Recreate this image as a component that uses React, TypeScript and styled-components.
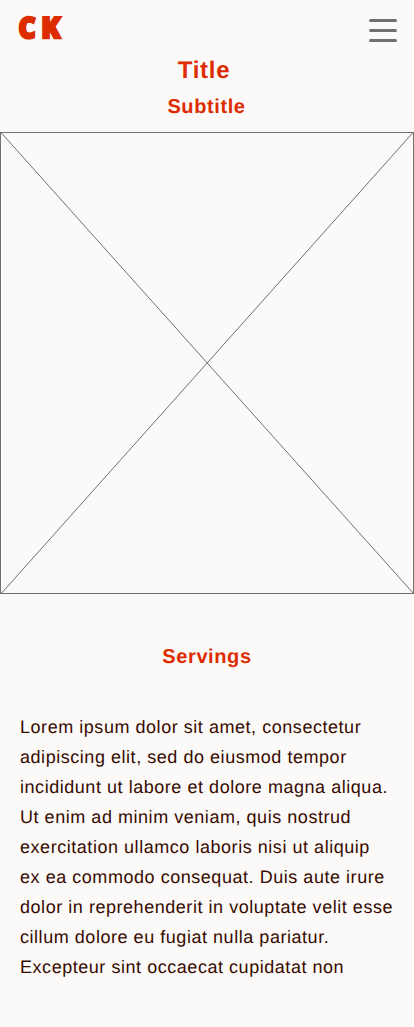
import React from "react";
import styled, { createGlobalStyle } from "styled-components";

const GlobalStyle = createGlobalStyle`
  * { box-sizing: border-box; }
  body {
    margin: 0;
    background: #fcfaf8;
    color: #370b00;
    font-family: "Liberation Sans", Arial, sans-serif;
    text-rendering: geometricPrecision;
  }
`;

const Page = styled.main`
  display: flex;
  flex-direction: column;
  min-height: 1027px;
`;

const Header = styled.header`
  display: flex;
  flex: none;
  justify-content: space-between;
  align-items: flex-start;
  height: 56px;
  padding: 15px 17px 0 18px;
`;

const Logo = styled.svg`
  display: block;
  width: 46px;
  height: 26px;
  overflow: visible;
  fill: #dd2c00;
  stroke: #dd2c00;
  stroke-width: 2.4px;
  font-family: "Noto Sans", sans-serif;
  font-size: 29px;
  font-weight: 900;
`;

const MenuButton = styled.button`
  display: flex;
  flex-direction: column;
  gap: 7px;
  width: 28px;
  margin: 4px 0 0;
  padding: 0;
  border: 0;
  background: none;
`;

const MenuBar = styled.span`
  height: 3px;
  border-radius: 1.5px;
  background: #707070;
`;

const Heading = styled.h2<{ $size: number; $line: number; $inset?: number }>`
  margin: 0;
  padding-right: ${(p) => p.$inset ?? 0}px;
  color: #dd2c00;
  font-size: ${(p) => p.$size}px;
  line-height: ${(p) => p.$line}px;
  letter-spacing: 0.03em;
  text-align: center;
`;

const Titles = styled.section`
  flex: none;
  height: 76px;
`;

const Placeholder = styled.svg`
  display: block;
  flex: none;
  width: 414px;
  height: 462px;
  fill: none;
  stroke: #707070;
`;

const Servings = styled.section`
  padding-top: 48px;
`;

const Copy = styled.p`
  margin: 40px 20px 0;
  font-size: 18px;
  line-height: 30px;
  letter-spacing: 0.03em;
  white-space: pre;
`;

const text = `Lorem ipsum dolor sit amet, consectetur
adipiscing elit, sed do eiusmod tempor
incididunt ut labore et dolore magna aliqua.
Ut enim ad minim veniam, quis nostrud
exercitation ullamco laboris nisi ut aliquip
ex ea commodo consequat. Duis aute irure
dolor in reprehenderit in voluptate velit esse
cillum dolore eu fugiat nulla pariatur.
Excepteur sint occaecat cupidatat non`;

export default function App() {
  return (
    <Page>
      <GlobalStyle />
      <Header>
        <Logo viewBox="0 0 46 26" aria-label="CK">
          <text x="0.6" y="22.8" textLength="17.2" lengthAdjust="spacingAndGlyphs">C</text>
          <text x="23.2" y="22.8" textLength="19.2" lengthAdjust="spacingAndGlyphs">K</text>
        </Logo>
        <MenuButton aria-label="Menu">
          <MenuBar />
          <MenuBar />
          <MenuBar />
        </MenuButton>
      </Header>
      <Titles>
        <Heading as="h1" $size={24} $line={30} $inset={6}>Title</Heading>
        <Heading $size={20} $line={42} $inset={1}>Subtitle</Heading>
      </Titles>
      <Placeholder viewBox="0 0 414 462">
        <rect x="0.5" y="0.5" width="413" height="461" />
        <path d="M0.5 0L413.5 461.5M413.5 0L0.8 462" />
      </Placeholder>
      <Servings>
        <Heading $size={20} $line={30}>Servings</Heading>
        <Copy>{text}</Copy>
      </Servings>
    </Page>
  );
}
